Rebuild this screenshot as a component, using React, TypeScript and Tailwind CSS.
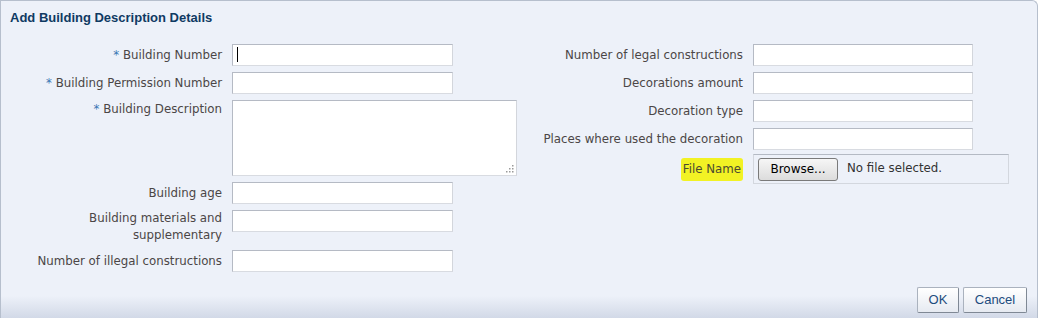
import { type FunctionComponent, type ReactNode } from 'react'

interface RowProps {
  label: ReactNode
  required?: boolean
  top?: boolean
  labelWidth: string
  children: ReactNode
}

const Row: FunctionComponent<RowProps> = ({ label, required, top, labelWidth, children }) => {
  return (
    <div className={`flex flex-row gap-[10px] ${top ? 'items-start' : 'items-center'}`}>
      <div className={`${labelWidth} text-right font-['DejaVu_Sans',Verdana,sans-serif] text-[11.8px] leading-[17px] text-[#4b4646]`}>
        {required && <span className="text-[#3a76b4]">* </span>}
        {label}
      </div>
      {children}
    </div>
  )
}

const TextInput: FunctionComponent<{ width: string, cursor?: boolean }> = ({ width, cursor }) => {
  return (
    <div
      className={`${width} relative h-[22px] border border-[#b5bac4] border-b-[#d8dbe1] border-r-[#d3d6dc] bg-white`}
    >
      {cursor && <div className="absolute left-[4px] top-[2px] h-[15px] w-px bg-black" />}
    </div>
  )
}

const App: FunctionComponent = () => {
  return (
    <div className="flex h-[318px] w-[1038px] flex-col rounded-tr-[6px] border-l border-r border-t border-[#b6bfcd] bg-[linear-gradient(to_bottom,#edf1f9_0%,#edf1f9_93%,#d2d9e7_100%)] font-['Liberation_Sans',Arial,sans-serif]">
      {/* header */}
      <div className="flex h-[33px] items-center pl-[9px] text-[13px] font-bold text-[#0f3a63]">
        Add Building Description Details
      </div>

      {/* body */}
      <div className="flex flex-row items-start pt-[10px]">
        {/* left column */}
        <div className="flex flex-col gap-[6px]">
          <Row label="Building Number" required labelWidth="w-[221px]">
            <TextInput width="w-[221px]" cursor />
          </Row>
          <Row label="Building Permission Number" required labelWidth="w-[221px]">
            <TextInput width="w-[221px]" />
          </Row>
          <Row label="Building Description" required top labelWidth="w-[221px] pt-[1px]">
            <div className="relative h-[76px] w-[285px] border border-[#b5bac4] border-b-[#d8dbe1] border-r-[#d3d6dc] bg-white">
              <svg className="absolute bottom-[2px] right-[2px]" width="9" height="9" viewBox="0 0 9 9">
                <rect x="7" y="1" width="1.5" height="1.5" fill="#9a9a9a" />
                <rect x="4" y="4" width="1.5" height="1.5" fill="#9a9a9a" />
                <rect x="7" y="4" width="1.5" height="1.5" fill="#9a9a9a" />
                <rect x="1" y="7" width="1.5" height="1.5" fill="#9a9a9a" />
                <rect x="4" y="7" width="1.5" height="1.5" fill="#9a9a9a" />
                <rect x="7" y="7" width="1.5" height="1.5" fill="#9a9a9a" />
              </svg>
            </div>
          </Row>
          <Row label="Building age" labelWidth="w-[221px]">
            <TextInput width="w-[221px]" />
          </Row>
          <Row
            label={
              <>
                Building materials and
                <br />
                supplementary
              </>
            }
            top
            labelWidth="w-[221px]"
          >
            <TextInput width="w-[221px]" />
          </Row>
          <Row label="Number of illegal constructions" labelWidth="w-[221px]">
            <TextInput width="w-[221px]" />
          </Row>
        </div>

        {/* right column */}
        <div className="ml-[3px] flex flex-col gap-[6px]">
          <Row label="Number of legal constructions" labelWidth="w-[223px]">
            <TextInput width="w-[220px]" />
          </Row>
          <Row label="Decorations amount" labelWidth="w-[223px]">
            <TextInput width="w-[220px]" />
          </Row>
          <Row label="Decoration type" labelWidth="w-[223px]">
            <TextInput width="w-[220px]" />
          </Row>
          <Row label="Places where used the decoration" labelWidth="w-[223px]">
            <TextInput width="w-[220px]" />
          </Row>
          <div className="mt-[-2px] flex flex-row items-center gap-[10px]">
            <div className="flex w-[223px] justify-end">
              <span className="rounded-[3px] bg-[#f2f224] px-[2px] py-[3px] font-['DejaVu_Sans',Verdana,sans-serif] text-[11.8px] leading-[17px] text-[#4b4a30]">
                File Name
              </span>
            </div>
            <div className="flex h-[30px] w-[256px] items-center border border-[#d3d7de] border-t-[#b4bac4] pl-[4px] font-['DejaVu_Sans',Verdana,sans-serif]">
              <button className="h-[23px] w-[80px] rounded-[3px] border border-[#7a7a7a] bg-[linear-gradient(to_bottom,#f6f6f6,#dcdcdc)] text-[12px] text-black">
                Browse...
              </button>
              <span className="ml-[9px] text-[11.8px] text-[#333]">No file selected.</span>
            </div>
          </div>
        </div>
      </div>

      {/* footer */}
      <div className="mt-auto flex flex-row justify-end gap-[4px] pb-[5px] pr-[10px]">
        <button className="h-[26px] w-[42px] rounded-[2px] border border-[#aab2be] border-b-[#7f8894] border-r-[#7f8894] bg-[linear-gradient(to_bottom,#ffffff,#e6eaf1)] text-[13px] text-[#1d4c7e]">
          OK
        </button>
        <button className="h-[26px] w-[64px] rounded-[2px] border border-[#aab2be] border-b-[#7f8894] border-r-[#7f8894] bg-[linear-gradient(to_bottom,#ffffff,#e6eaf1)] text-[13px] text-[#1d4c7e]">
          Cancel
        </button>
      </div>
    </div>
  )
}

export default App
